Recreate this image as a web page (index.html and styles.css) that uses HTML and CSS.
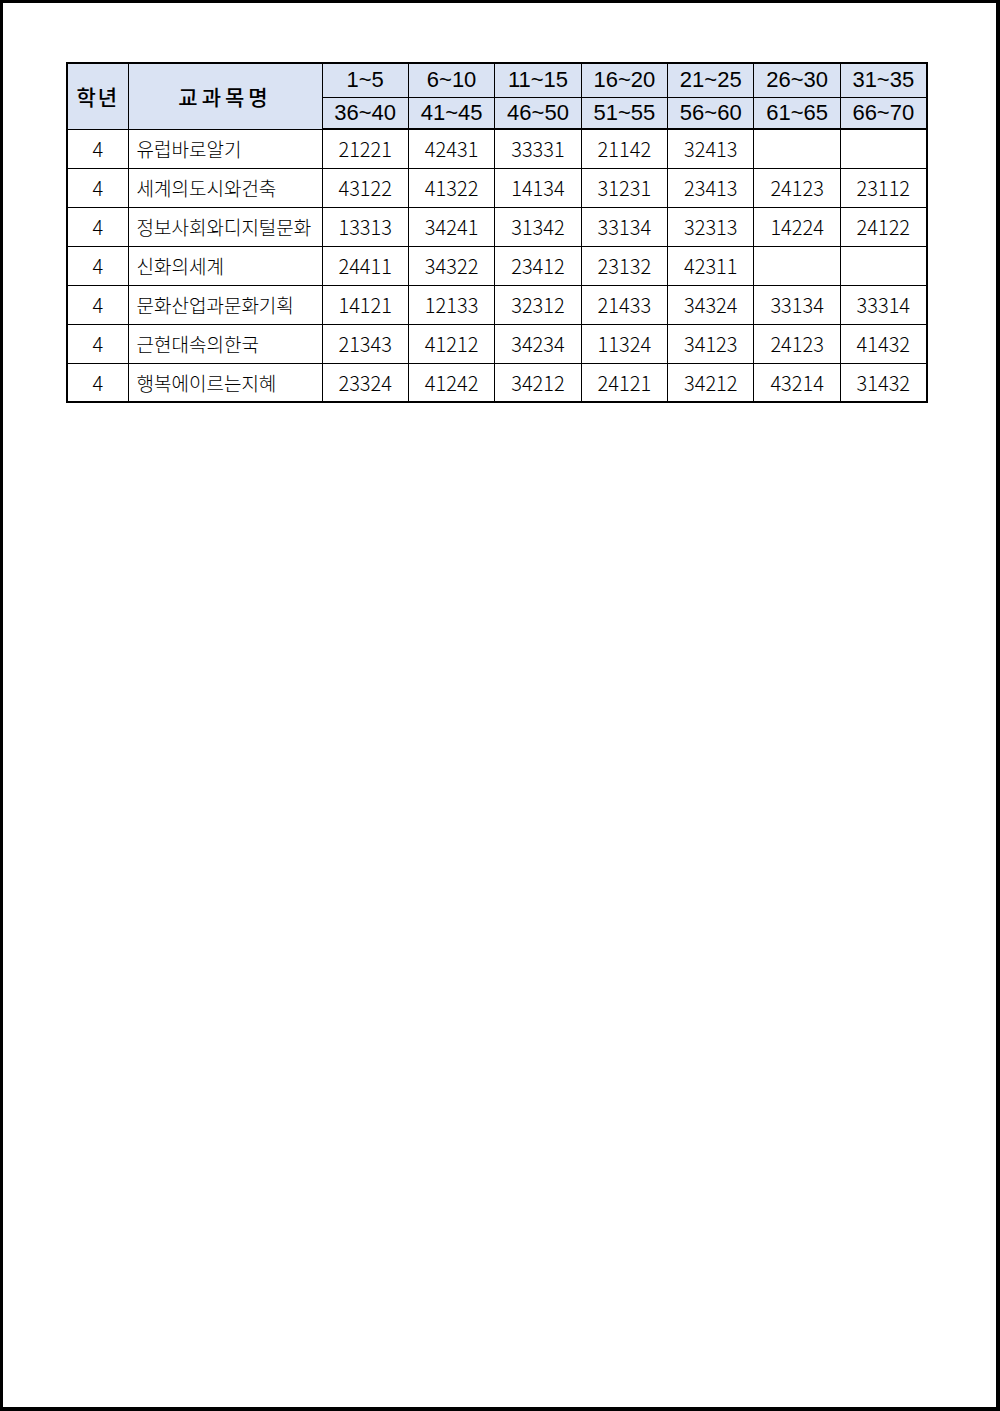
FILE: index.html
```html
<!DOCTYPE html>
<html lang="ko">
<head>
<meta charset="utf-8">
<link rel="stylesheet" href="styles.css">
</head>
<body>
<div class="page">
<table class="grid">
<colgroup>
<col class="c-grade"><col class="c-name">
<col class="c-n"><col class="c-n"><col class="c-n"><col class="c-n"><col class="c-n"><col class="c-n"><col class="c-n">
</colgroup>
<thead>
<tr class="h1">
<th rowspan="2" class="kh">학년</th>
<th rowspan="2" class="kh spaced">교과목명</th>
<th>1~5</th><th>6~10</th><th>11~15</th><th>16~20</th><th>21~25</th><th>26~30</th><th>31~35</th>
</tr>
<tr class="h2">
<th>36~40</th><th>41~45</th><th>46~50</th><th>51~55</th><th>56~60</th><th>61~65</th><th>66~70</th>
</tr>
</thead>
<tbody>
<tr><td>4</td><td class="name">유럽바로알기</td><td>21221</td><td>42431</td><td>33331</td><td>21142</td><td>32413</td><td></td><td></td></tr>
<tr><td>4</td><td class="name">세계의도시와건축</td><td>43122</td><td>41322</td><td>14134</td><td>31231</td><td>23413</td><td>24123</td><td>23112</td></tr>
<tr><td>4</td><td class="name">정보사회와디지털문화</td><td>13313</td><td>34241</td><td>31342</td><td>33134</td><td>32313</td><td>14224</td><td>24122</td></tr>
<tr><td>4</td><td class="name">신화의세계</td><td>24411</td><td>34322</td><td>23412</td><td>23132</td><td>42311</td><td></td><td></td></tr>
<tr><td>4</td><td class="name">문화산업과문화기획</td><td>14121</td><td>12133</td><td>32312</td><td>21433</td><td>34324</td><td>33134</td><td>33314</td></tr>
<tr><td>4</td><td class="name">근현대속의한국</td><td>21343</td><td>41212</td><td>34234</td><td>11324</td><td>34123</td><td>24123</td><td>41432</td></tr>
<tr><td>4</td><td class="name">행복에이르는지혜</td><td>23324</td><td>41242</td><td>34212</td><td>24121</td><td>34212</td><td>43214</td><td>31432</td></tr>
</tbody>
</table>
</div>
</body>
</html>
```
FILE: styles.css
```css
html, body {
  margin: 0;
  padding: 0;
  background: #fff;
}
.page {
  box-sizing: border-box;
  width: 1000px;
  height: 1411px;
  border-style: solid;
  border-color: #000;
  border-width: 3px 4px 4px 3px;
  padding: 59px 0 0 63px;
}
.grid {
  border-collapse: collapse;
  table-layout: fixed;
  width: 860px;
  border: 2px solid #000;
  font-family: "Noto Sans CJK KR", "Liberation Sans", sans-serif;
  color: #111;
}
.c-grade { width: 61px; }
.c-name { width: 194px; }
.c-n { width: 86.4px; }
.grid th, .grid td {
  border: 1px solid #000;
  padding: 0;
  text-align: center;
  vertical-align: middle;
  white-space: nowrap;
  overflow: hidden;
}
.grid thead th {
  background: #dae3f3;
  font-family: "Liberation Sans", Arial, sans-serif;
  font-weight: normal;
  font-size: 22px;
  color: #000;
}
.grid thead th.kh {
  font-family: "Noto Sans CJK KR", sans-serif;
  font-weight: 500;
  font-size: 21px;
  letter-spacing: 2px;
}
.grid thead th.spaced {
  letter-spacing: 4px;
}
.grid thead tr.h2 th {
  border-bottom: 2px solid #000;
}
.h1 { height: 34px; }
.h2 { height: 32px; }
.grid tbody tr { height: 39px; }
.grid tbody td {
  font-size: 20px;
  font-weight: 200;
  color: #000;
}
.grid tbody td.name {
  text-align: left;
  padding-left: 8px;
  font-size: 19px;
  letter-spacing: 0;
}
```
